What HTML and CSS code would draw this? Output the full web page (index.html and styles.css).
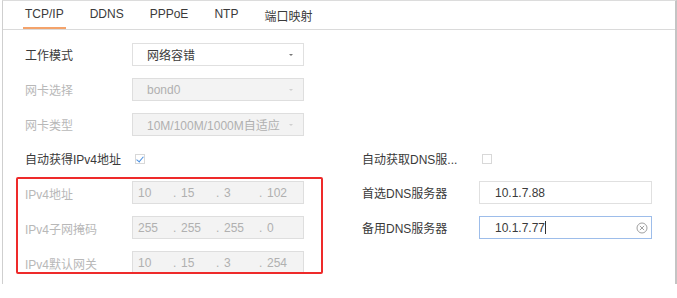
FILE: index.html
```html
<!DOCTYPE html>
<html lang="zh-CN">
<head>
    <meta charset="UTF-8">
    <title>网络设置 - TCP/IP</title>
    <link rel="stylesheet" href="styles.css">
</head>
<body>
    <div class="panel">
        <nav class="tabs">
            <span class="tab active">TCP/IP</span>
            <span class="tab">DDNS</span>
            <span class="tab">PPPoE</span>
            <span class="tab">NTP</span>
            <span class="tab">端口映射</span>
        </nav>

        <div class="form">
            <div class="row">
                <span class="label">工作模式</span>
                <div class="select">网络容错<i class="arrow"></i></div>
            </div>
            <div class="row">
                <span class="label off">网卡选择</span>
                <div class="select disabled">bond0<i class="arrow"></i></div>
            </div>
            <div class="row">
                <span class="label off">网卡类型</span>
                <div class="select disabled">10M/100M/1000M自适应<i class="arrow"></i></div>
            </div>

            <div class="cols">
                <div class="col-left">
                    <div class="row check-row">
                        <span class="label">自动获得IPv4地址</span>
                        <span class="checkbox checked"></span>
                    </div>
                    <div class="group">
                        <div class="row">
                            <span class="label off">IPv4地址</span>
                            <div class="ip">
                                <span class="seg">10</span><span class="dot">.</span>
                                <span class="seg">15</span><span class="dot">.</span>
                                <span class="seg">3</span><span class="dot">.</span>
                                <span class="seg">102</span>
                            </div>
                        </div>
                        <div class="row">
                            <span class="label off">IPv4子网掩码</span>
                            <div class="ip">
                                <span class="seg">255</span><span class="dot">.</span>
                                <span class="seg">255</span><span class="dot">.</span>
                                <span class="seg">255</span><span class="dot">.</span>
                                <span class="seg">0</span>
                            </div>
                        </div>
                        <div class="row">
                            <span class="label off">IPv4默认网关</span>
                            <div class="ip">
                                <span class="seg">10</span><span class="dot">.</span>
                                <span class="seg">15</span><span class="dot">.</span>
                                <span class="seg">3</span><span class="dot">.</span>
                                <span class="seg">254</span>
                            </div>
                        </div>
                    </div>
                </div>

                <div class="col-right">
                    <div class="row check-row">
                        <span class="label">自动获取DNS服...</span>
                        <span class="checkbox"></span>
                    </div>
                    <div class="row">
                        <span class="label">首选DNS服务器</span>
                        <div class="input">10.1.7.88</div>
                    </div>
                    <div class="row">
                        <span class="label">备用DNS服务器</span>
                        <div class="input focus">10.1.7.77<span class="caret"></span>
                            <svg class="clear" width="12" height="12" viewBox="0 0 12 12">
                                <circle cx="6" cy="6" r="5" fill="none" stroke="#a0a0a0" stroke-width="1"/>
                                <path d="M3.9 3.9 L8.1 8.1 M8.1 3.9 L3.9 8.1" stroke="#a0a0a0" stroke-width="1"/>
                            </svg>
                        </div>
                    </div>
                </div>
            </div>
        </div>
    </div>
</body>
</html>
```

FILE: styles.css
```css
* {
    margin: 0;
    padding: 0;
    box-sizing: border-box;
}

body {
    font-family: 'Liberation Sans', 'Noto Sans CJK SC', sans-serif;
    font-size: 12px;
    color: #3a3a3a;
    background-color: #ffffff;
}

.panel {
    margin-left: 2px;
    width: 675px;
    height: 284px;
    border-top: 1px solid #dcdcdc;
    border-left: 1px solid #cfcfcf;
    border-right: 2px solid #c4c4c4;
}

.tabs {
    display: flex;
    gap: 22px;
    height: 29px;
    padding-left: 20px;
    border-bottom: 1px solid #dadada;
}

.tab {
    padding: 6px 2px 0;
    color: #3a3a3a;
}

.tab.active {
    border-bottom: 2px solid #f4a36b;
}

.form {
    padding: 7px 0 0 22px;
}

.row {
    display: flex;
    align-items: center;
    height: 35px;
}

.label {
    width: 107px;
    flex-shrink: 0;
    white-space: nowrap;
}

.label.off {
    color: #b8b8b8;
}

.select,
.ip,
.input {
    display: flex;
    align-items: center;
    width: 172px;
    height: 23px;
    border: 1px solid #e0e0e0;
    background-color: #ffffff;
}

.select {
    padding-left: 14px;
}

.select.disabled,
.ip {
    background-color: #f3f3f3;
    border-color: #dedede;
    color: #b0b0b0;
}

.arrow {
    margin-left: auto;
    margin-right: 10px;
    border-left: 2px solid transparent;
    border-right: 2px solid transparent;
    border-top: 2px solid #777;
}

.select.disabled .arrow {
    border-top-color: #d0d0d0;
}

.cols {
    display: flex;
}

.col-left {
    width: 307px;
    margin-left: -9px;
}

.col-left > .check-row {
    padding-left: 9px;
}

.check-row {
    height: 33px;
}

.checkbox {
    width: 10px;
    height: 10px;
    margin-left: 3px;
    border: 1px solid #d8d8d8;
    position: relative;
}

.checkbox.checked::after {
    content: '';
    position: absolute;
    left: 2px;
    top: 0;
    width: 3px;
    height: 6px;
    border-right: 1px solid #4a8fe0;
    border-bottom: 1px solid #4a8fe0;
    transform: rotate(40deg);
}

.group {
    margin-top: 2px;
    height: 97px;
    overflow: hidden;
    border: 2px solid #ee2a2a;
    border-radius: 2px;
    padding-left: 7px;
}

.group .row {
    align-items: flex-start;
}

.group .label {
    margin-top: 6px;
}

.group .ip {
    margin-top: 2px;
}

.seg {
    width: 40px;
    padding-left: 5px;
}

.dot {
    width: 3px;
}

.col-right {
    margin-left: 39px;
}

.col-right .label {
    width: 117px;
}

.input {
    width: 173px;
    padding-left: 15px;
}

.input.focus {
    border-color: #9dbdea;
}

.caret {
    width: 1px;
    height: 13px;
    background-color: #333;
}

.clear {
    margin-left: auto;
    margin-right: 3px;
}
```
